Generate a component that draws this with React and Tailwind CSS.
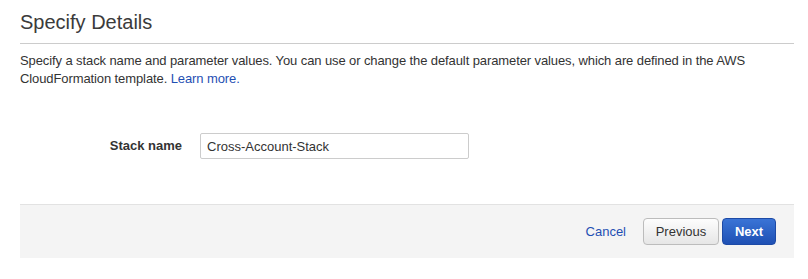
export default function App() {
  return (
    <div className="w-[808px] h-[279px] bg-white pl-[20px] pr-[14px] text-[#333] font-['Liberation_Sans',Arial,sans-serif]">
      <h2 className="pt-[10px] pb-[8px] text-[20px] leading-[25px] text-[#3b3b3b] border-b border-[#cccccc]">
        Specify Details
      </h2>
      <p className="mt-[8px] text-[13px] leading-[18px] tracking-[-0.1px]">
        Specify a stack name and parameter values. You can use or change the default parameter values, which are defined in the AWS
        CloudFormation template. <a href="#" className="text-[#1f4fb3]">Learn more.</a>
      </p>

      <div className="mt-[45px] flex items-center gap-[18px]">
        <label className="w-[162px] text-right text-[13px] font-bold text-[#333]">Stack name</label>
        <input
          defaultValue="Cross-Account-Stack"
          className="w-[269px] h-[26px] px-[6px] text-[13px] text-[#333] border border-[#cccccc] rounded-[2px] outline-none"
        />
      </div>

      <div className="mt-[45px] h-[54px] bg-[#f4f4f4] border-t border-[#e2e2e2] flex items-center justify-end pr-[18px]">
        <a href="#" className="text-[13px] text-[#1f4fb3] mr-[17px]">Cancel</a>
        <button className="w-[76px] h-[27px] text-[13px] text-[#333] rounded-[4px] border border-[#bcbcbc] bg-gradient-to-b from-[#fdfdfd] to-[#e6e6e6] mr-[3px]">
          Previous
        </button>
        <button className="w-[54px] h-[27px] text-[13px] font-bold text-white rounded-[4px] border border-[#1d4aa6] bg-gradient-to-b from-[#3a74d6] to-[#1f50b4]">
          Next
        </button>
      </div>
    </div>
  )
}
